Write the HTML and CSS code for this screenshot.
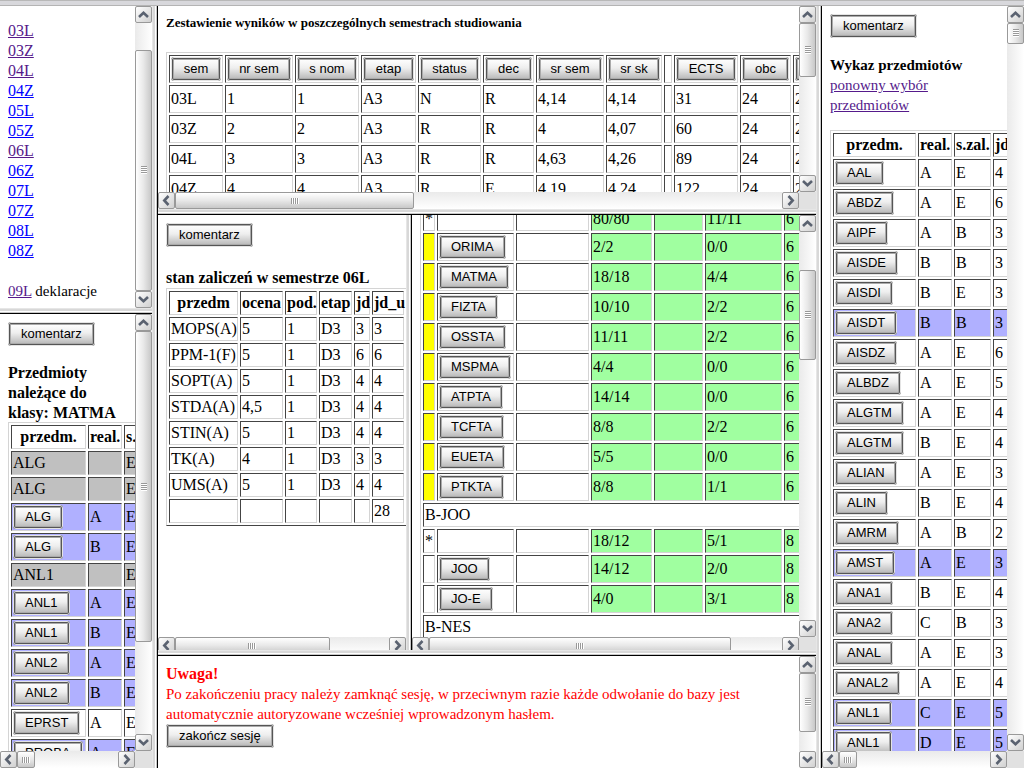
FILE: index.html
```html
<!DOCTYPE html>
<html lang="pl">
<head>
<meta charset="utf-8">
<title>Wyniki studiowania</title>
<link rel="stylesheet" href="styles.css">
</head>
<body>
<svg class="defs" aria-hidden="true">
<symbol id="up" viewBox="0 0 11 11"><path d="M1 8 L5.5 3.8 L10 8" fill="none" stroke="#5a6270" stroke-width="2.6"/></symbol>
<symbol id="down" viewBox="0 0 11 11"><path d="M1 3 L5.5 7.2 L10 3" fill="none" stroke="#5a6270" stroke-width="2.6"/></symbol>
<symbol id="left" viewBox="0 0 11 11"><path d="M7.5 1 L3.3 5.5 L7.5 10" fill="none" stroke="#5a6270" stroke-width="2.6"/></symbol>
<symbol id="right" viewBox="0 0 11 11"><path d="M3.5 1 L7.7 5.5 L3.5 10" fill="none" stroke="#5a6270" stroke-width="2.6"/></symbol>
</svg>
<div class="window">
<div class="column side-left">
  <nav class="frame vertical-only" data-v="27,241,0">
    <div class="pane semesters">
      <ul>
        <li><a class="visited" href="#03L">03L</a></li>
        <li><a class="visited" href="#03Z">03Z</a></li>
        <li><a class="visited" href="#04L">04L</a></li>
        <li><a href="#04Z">04Z</a></li>
        <li><a href="#05L">05L</a></li>
        <li><a href="#05Z">05Z</a></li>
        <li><a class="visited" href="#06L">06L</a></li>
        <li><a href="#06Z">06Z</a></li>
        <li><a href="#07L">07L</a></li>
        <li><a href="#07Z">07Z</a></li>
        <li><a href="#08L">08L</a></li>
        <li><a href="#08Z">08Z</a></li>
      </ul>
      <p><a class="visited" href="#09L">09L</a> deklaracje</p>
    </div>
  </nav>
  <div class="split-h"></div>
  <section class="frame" data-v="0,311,92" data-h="0,16,85">
    <div class="pane">
      <button class="btn">komentarz</button>
      <h2>Przedmioty<br>należące do<br>klasy: MATMA</h2>
      <table class="w-class">
        <colgroup><col class="c77"><col class="c36"><col class="c39"></colgroup>
        <tr><th>przedm.</th><th>real.</th><th>s.zal.</th></tr>
        <tr class="gray"><td>ALG</td><td></td><td>E</td></tr>
        <tr class="gray"><td>ALG</td><td></td><td>E</td></tr>
        <tr class="blue"><td><button class="btn">ALG</button></td><td>A</td><td>E</td></tr>
        <tr class="blue"><td><button class="btn">ALG</button></td><td>B</td><td>E</td></tr>
        <tr class="gray"><td>ANL1</td><td></td><td>E</td></tr>
        <tr class="blue"><td><button class="btn">ANL1</button></td><td>A</td><td>E</td></tr>
        <tr class="blue"><td><button class="btn">ANL1</button></td><td>B</td><td>E</td></tr>
        <tr class="blue"><td><button class="btn">ANL2</button></td><td>A</td><td>E</td></tr>
        <tr class="blue"><td><button class="btn">ANL2</button></td><td>B</td><td>E</td></tr>
        <tr><td><button class="btn">EPRST</button></td><td>A</td><td>E</td></tr>
        <tr class="blue"><td><button class="btn">PROBA</button></td><td>A</td><td>E</td></tr>
      </table>
    </div>
  </section>
</div>
<div class="split-v"></div>
<main class="column center">
  <section class="frame" data-v="0,53,99" data-h="0,238,369">
    <div class="pane">
      <h1>Zestawienie wyników w poszczególnych semestrach studiowania</h1>
      <table class="w-results">
        <colgroup><col class="c56"><col class="c70"><col class="c66"><col class="c57"><col class="c65"><col class="c53"><col class="c70"><col class="c58"><col class="c10"><col class="c66"><col class="c53"><col class="c66"></colgroup>
        <tr class="sort"><td><button class="btn">sem</button></td><td><button class="btn">nr sem</button></td><td><button class="btn">s nom</button></td><td><button class="btn">etap</button></td><td><button class="btn">status</button></td><td><button class="btn">dec</button></td><td><button class="btn">sr sem</button></td><td><button class="btn">sr sk</button></td><td></td><td><button class="btn">ECTS</button></td><td><button class="btn">obc</button></td><td><button class="btn"></button></td></tr>
        <tr class="tall"><td>03L</td><td>1</td><td>1</td><td>A3</td><td>N</td><td>R</td><td>4,14</td><td>4,14</td><td></td><td>31</td><td>24</td><td>2</td></tr>
        <tr class="tall"><td>03Z</td><td>2</td><td>2</td><td>A3</td><td>R</td><td>R</td><td>4</td><td>4,07</td><td></td><td>60</td><td>24</td><td>2</td></tr>
        <tr class="tall"><td>04L</td><td>3</td><td>3</td><td>A3</td><td>R</td><td>R</td><td>4,63</td><td>4,26</td><td></td><td>89</td><td>24</td><td>2</td></tr>
        <tr class="tall"><td>04Z</td><td>4</td><td>4</td><td>A3</td><td>R</td><td>E</td><td>4,19</td><td>4,24</td><td></td><td>122</td><td>24</td><td>2</td></tr>
      </table>
    </div>
  </section>
  <div class="split-h"></div>
  <div class="middle">
    <section class="frame horizontal-only" data-h="0,154,60">
      <div class="pane">
        <button class="btn">komentarz</button>
        <h2>stan zaliczeń w semestrze 06L</h2>
        <table class="w-passed">
          <colgroup><col class="c71"><col class="c45"><col class="c34"><col class="c35"><col class="c18"><col class="c34"></colgroup>
          <tr><th>przedm</th><th>ocena</th><th>pod.</th><th>etap</th><th>jd</th><th>jd_u</th></tr>
          <tr><td>MOPS(A)</td><td>5</td><td>1</td><td>D3</td><td>3</td><td>3</td></tr>
          <tr><td>PPM-1(F)</td><td>5</td><td>1</td><td>D3</td><td>6</td><td>6</td></tr>
          <tr><td>SOPT(A)</td><td>5</td><td>1</td><td>D3</td><td>4</td><td>4</td></tr>
          <tr><td>STDA(A)</td><td>4,5</td><td>1</td><td>D3</td><td>4</td><td>4</td></tr>
          <tr><td>STIN(A)</td><td>5</td><td>1</td><td>D3</td><td>4</td><td>4</td></tr>
          <tr><td>TK(A)</td><td>4</td><td>1</td><td>D3</td><td>3</td><td>3</td></tr>
          <tr><td>UMS(A)</td><td>5</td><td>1</td><td>D3</td><td>4</td><td>4</td></tr>
          <tr><td></td><td></td><td></td><td></td><td></td><td>28</td></tr>
        </table>
      </div>
    </section>
    <div class="split-v"></div>
    <section class="frame" data-v="38,89,261" data-h="0,302,51">
      <div class="pane scrolled">
        <table class="w-groups">
          <colgroup><col class="c14"><col class="c79"><col class="c75"><col class="c63"><col class="c51"><col class="c79"><col class="c79"></colgroup>
          <tr><td>*</td><td></td><td></td><td class="ok">80/80</td><td class="ok"></td><td class="ok">11/11</td><td class="ok">6</td></tr>
          <tr><td class="mark"></td><td><button class="btn">ORIMA</button></td><td></td><td class="ok">2/2</td><td class="ok"></td><td class="ok">0/0</td><td class="ok">6</td></tr>
          <tr><td class="mark"></td><td><button class="btn">MATMA</button></td><td></td><td class="ok">18/18</td><td class="ok"></td><td class="ok">4/4</td><td class="ok">6</td></tr>
          <tr><td class="mark"></td><td><button class="btn">FIZTA</button></td><td></td><td class="ok">10/10</td><td class="ok"></td><td class="ok">2/2</td><td class="ok">6</td></tr>
          <tr><td class="mark"></td><td><button class="btn">OSSTA</button></td><td></td><td class="ok">11/11</td><td class="ok"></td><td class="ok">2/2</td><td class="ok">6</td></tr>
          <tr><td class="mark"></td><td><button class="btn">MSPMA</button></td><td></td><td class="ok">4/4</td><td class="ok"></td><td class="ok">0/0</td><td class="ok">6</td></tr>
          <tr><td class="mark"></td><td><button class="btn">ATPTA</button></td><td></td><td class="ok">14/14</td><td class="ok"></td><td class="ok">0/0</td><td class="ok">6</td></tr>
          <tr><td class="mark"></td><td><button class="btn">TCFTA</button></td><td></td><td class="ok">8/8</td><td class="ok"></td><td class="ok">2/2</td><td class="ok">6</td></tr>
          <tr><td class="mark"></td><td><button class="btn">EUETA</button></td><td></td><td class="ok">5/5</td><td class="ok"></td><td class="ok">0/0</td><td class="ok">6</td></tr>
          <tr><td class="mark"></td><td><button class="btn">PTKTA</button></td><td></td><td class="ok">8/8</td><td class="ok"></td><td class="ok">1/1</td><td class="ok">6</td></tr>
          <tr><td colspan="7">B-JOO</td></tr>
          <tr><td>*</td><td></td><td></td><td class="ok">18/12</td><td class="ok"></td><td class="ok">5/1</td><td class="ok">8</td></tr>
          <tr><td></td><td><button class="btn">JOO</button></td><td></td><td class="ok">14/12</td><td class="ok"></td><td class="ok">2/0</td><td class="ok">8</td></tr>
          <tr><td></td><td><button class="btn">JO-E</button></td><td></td><td class="ok">4/0</td><td class="ok"></td><td class="ok">3/1</td><td class="ok">8</td></tr>
          <tr><td colspan="7">B-NES</td></tr>
        </table>
      </div>
    </section>
  </div>
  <div class="split-h"></div>
  <section class="frame vertical-only" data-v="0,59,20">
    <div class="pane warning">
      <p><strong>Uwaga!</strong></p>
      <p>Po zakończeniu pracy należy zamknąć sesję, w przeciwnym razie każde odwołanie do bazy jest<br>automatycznie autoryzowane wcześniej wprowadzonym hasłem.</p>
      <button class="btn">zakończ sesję</button>
    </div>
  </section>
</main>
<div class="split-v"></div>
<div class="column side-right">
  <section class="frame" data-v="0,19,692" data-h="0,16,134">
    <div class="pane catalogue">
      <button class="btn">komentarz</button>
      <h2>Wykaz przedmiotów</h2>
      <p><a class="visited" href="#wybor">ponowny wybór<br>przedmiotów</a></p>
      <table class="w-list">
        <colgroup><col class="c85"><col class="c36"><col class="c39"><col class="c18"></colgroup>
        <tr><th>przedm.</th><th>real.</th><th>s.zal.</th><th>jd</th></tr>
        <tr><td><button class="btn">AAL</button></td><td>A</td><td>E</td><td>4</td></tr>
        <tr><td><button class="btn">ABDZ</button></td><td>A</td><td>E</td><td>6</td></tr>
        <tr><td><button class="btn">AIPF</button></td><td>A</td><td>B</td><td>3</td></tr>
        <tr><td><button class="btn">AISDE</button></td><td>B</td><td>B</td><td>3</td></tr>
        <tr><td><button class="btn">AISDI</button></td><td>B</td><td>E</td><td>3</td></tr>
        <tr class="blue"><td><button class="btn">AISDT</button></td><td>B</td><td>B</td><td>3</td></tr>
        <tr><td><button class="btn">AISDZ</button></td><td>A</td><td>E</td><td>6</td></tr>
        <tr><td><button class="btn">ALBDZ</button></td><td>A</td><td>E</td><td>5</td></tr>
        <tr><td><button class="btn">ALGTM</button></td><td>A</td><td>E</td><td>4</td></tr>
        <tr><td><button class="btn">ALGTM</button></td><td>B</td><td>E</td><td>4</td></tr>
        <tr><td><button class="btn">ALIAN</button></td><td>A</td><td>E</td><td>3</td></tr>
        <tr><td><button class="btn">ALIN</button></td><td>B</td><td>E</td><td>4</td></tr>
        <tr><td><button class="btn">AMRM</button></td><td>A</td><td>B</td><td>2</td></tr>
        <tr class="blue"><td><button class="btn">AMST</button></td><td>A</td><td>E</td><td>3</td></tr>
        <tr><td><button class="btn">ANA1</button></td><td>B</td><td>E</td><td>4</td></tr>
        <tr><td><button class="btn">ANA2</button></td><td>C</td><td>B</td><td>3</td></tr>
        <tr><td><button class="btn">ANAL</button></td><td>A</td><td>E</td><td>3</td></tr>
        <tr><td><button class="btn">ANAL2</button></td><td>A</td><td>E</td><td>4</td></tr>
        <tr class="blue"><td><button class="btn">ANL1</button></td><td>C</td><td>E</td><td>5</td></tr>
        <tr class="blue"><td><button class="btn">ANL1</button></td><td>D</td><td>E</td><td>5</td></tr>
      </table>
    </div>
  </section>
</div>
</div>
<script src="scrollbars.js"></script>
</body>
</html>
```
FILE: scrollbars.js
```js
// Adds a scroll bar to each frame. data-v / data-h hold the proportions
// of the track before the thumb, the thumb itself and the track after it.
function bar(kind, spec, first, last) {
  var parts = spec.split(',');
  var el = document.createElement('div');
  el.className = 'bar ' + kind;
  el.innerHTML =
    '<button class="arrow" aria-label="' + first + '"><svg><use href="#' + first + '"/></svg></button>' +
    '<div class="track">' +
    '<span style="flex-grow:' + parts[0] + '"></span>' +
    '<span class="thumb" style="flex-grow:' + parts[1] + '"><i></i></span>' +
    '<span style="flex-grow:' + parts[2] + '"></span>' +
    '</div>' +
    '<button class="arrow" aria-label="' + last + '"><svg><use href="#' + last + '"/></svg></button>';
  return el;
}
document.querySelectorAll('.frame').forEach(function (frame) {
  if (frame.dataset.v) frame.appendChild(bar('bar-v', frame.dataset.v, 'up', 'down'));
  if (frame.dataset.h) frame.appendChild(bar('bar-h', frame.dataset.h, 'left', 'right'));
});
```
FILE: styles.css
```css
* { box-sizing: border-box; }

body {
  margin: 0;
  background: #fff;
  color: #000;
  font: 16px/20px "Liberation Serif", serif;
}

.defs { display: none; }

.window {
  height: 100vh;
  display: grid;
  grid-template-columns: minmax(0, 152fr) 6px minmax(0, 658fr) 6px minmax(0, 202fr);
  padding-top: 6px;
  background: linear-gradient(#b8b8b8 1px, #d8d8dc 1px 5px, #b4b4b4 5px 6px, #fff 6px);
  overflow: hidden;
}

.column { display: grid; min-height: 0; }
.side-left { grid-template-rows: minmax(0, 302fr) 6px minmax(0, 454fr); }
.center { grid-template-rows: minmax(0, 203fr) 6px minmax(0, 435fr) 6px minmax(0, 112fr); }
.side-right { grid-template-rows: minmax(0, 1fr); }
.middle {
  display: grid;
  grid-template-columns: minmax(0, 248fr) 6px minmax(0, 404fr);
  min-height: 0;
}

.split-v { background: linear-gradient(90deg, #e6e6e6 1px, #d8d8d8 1px 3px, #fff 3px 4px, #c8c8c8 4px 5px, #000 5px); }
.split-h { background: linear-gradient(#e6e6e6 1px, #d8d8d8 1px 3px, #fff 3px 4px, #c8c8c8 4px 5px, #000 5px); }

.frame {
  display: grid;
  grid-template-columns: minmax(0, 1fr) 17px;
  grid-template-rows: minmax(0, 1fr) 17px;
  background: #e1e1e1;
  overflow: hidden;
  min-height: 0;
}
.vertical-only { grid-template-rows: minmax(0, 1fr); }
.horizontal-only { grid-template-columns: minmax(0, 1fr); }
.middle .frame { grid-template-rows: minmax(0, 1fr) 13px; }

.pane { background: #fff; padding: 8px; overflow: hidden; }
.semesters { padding-top: 15px; }
.scrolled { padding-top: 0; }
.scrolled table { margin-top: -11px; }

h1, h2, p, ul { margin: 0; padding: 0; }
ul { list-style: none; margin-bottom: 20px; }
p { font-size: 15px; }
h1 { font-size: 13px; line-height: 18px; margin-bottom: 20px; white-space: nowrap; }
h2 { font-size: 16px; line-height: 20px; margin-top: 17px; }
.middle h2 { margin-top: 21px; }
.side-left h2 { margin-bottom: -1px; }
.catalogue h2 { font-size: 15px; }
.catalogue p { margin-bottom: 15px; }
.warning { color: #f00; }
.warning strong { font-size: 16px; }

a { color: #00f; }
a.visited { color: #551a8b; }

table {
  table-layout: fixed;
  border: 1px solid;
  border-color: #d4d4d4 #444 #444 #d4d4d4;
  border-spacing: 2px;
}
th, td {
  height: 24px;
  padding: 1px;
  border: 1px solid;
  border-color: #444 #d4d4d4 #d4d4d4 #444;
  text-align: left;
  vertical-align: middle;
  white-space: nowrap;
}
th { text-align: center; }
td:has(.btn), .tall td, .sort td { height: 28px; }
.gray td { background: #c0c0c0; }
.blue td { background: #b0b0ff; }
.ok { background: #a0ffa0; }
.mark { background: #ff0; }

.w-class { width: 156px; }
.w-results { width: 694px; }
.w-passed { width: 241px; }
.w-groups { width: 444px; }
.w-list { width: 182px; }

.c10 { width: 8px; }
.c14 { width: 12px; }
.c18 { width: 16px; }
.c34 { width: 32px; }
.c35 { width: 33px; }
.c36 { width: 34px; }
.c39 { width: 37px; }
.c45 { width: 43px; }
.c51 { width: 49px; }
.c53 { width: 51px; }
.c56 { width: 54px; }
.c57 { width: 55px; }
.c58 { width: 56px; }
.c63 { width: 61px; }
.c65 { width: 63px; }
.c66 { width: 64px; }
.c70 { width: 68px; }
.c71 { width: 69px; }
.c75 { width: 73px; }
.c77 { width: 75px; }
.c79 { width: 77px; }
.c85 { width: 83px; }

.btn {
  display: block;
  height: 24px;
  margin: 0;
  padding: 0 10px;
  border: 2px solid #555;
  border-radius: 3px;
  outline: 1px solid #e4e4e4;
  outline-offset: -1px;
  box-shadow: inset 0 0 0 1px #aaa;
  background: linear-gradient(#fff, #eee 45%, #b8b8b8);
  color: #000;
  font: 13px/20px "Liberation Sans", sans-serif;
  white-space: nowrap;
}
.pane > .btn { padding: 0 11px; }
.sort .btn { width: 100%; padding: 0; }

.bar { display: flex; overflow: hidden; background: #f6f6f6; }
.bar-v { grid-area: 1 / 2; flex-direction: column; }
.bar-h { grid-area: 2 / 1; height: 17px; }
.arrow {
  flex: none;
  width: 17px;
  height: 17px;
  padding: 2px;
  border: 1px solid #999;
  border-radius: 2px;
  background: linear-gradient(135deg, #fff, #d0d0d0);
}
.arrow svg { display: block; width: 11px; height: 11px; }
.track { flex: 1; display: flex; min-height: 0; min-width: 0; }
.bar-v .track { flex-direction: column; background: linear-gradient(90deg, #eaeaea, #fff); }
.bar-h .track { background: linear-gradient(#eaeaea, #fff); }
.track span { flex-basis: 0; }
.thumb {
  display: flex;
  align-items: center;
  justify-content: center;
  border: 1px solid #999;
  border-radius: 2px;
}
.bar-v .thumb { background: linear-gradient(90deg, #fff, #e8e8e8 50%, #c8c8c8); }
.bar-h .thumb { background: linear-gradient(#fff, #e8e8e8 50%, #c8c8c8); }
.bar-v .thumb i { width: 6px; height: 8px; background: repeating-linear-gradient(#999 0 1px, #fff 1px 2px); }
.bar-h .thumb i { width: 8px; height: 6px; background: repeating-linear-gradient(90deg, #999 0 1px, #fff 1px 2px); }
```
